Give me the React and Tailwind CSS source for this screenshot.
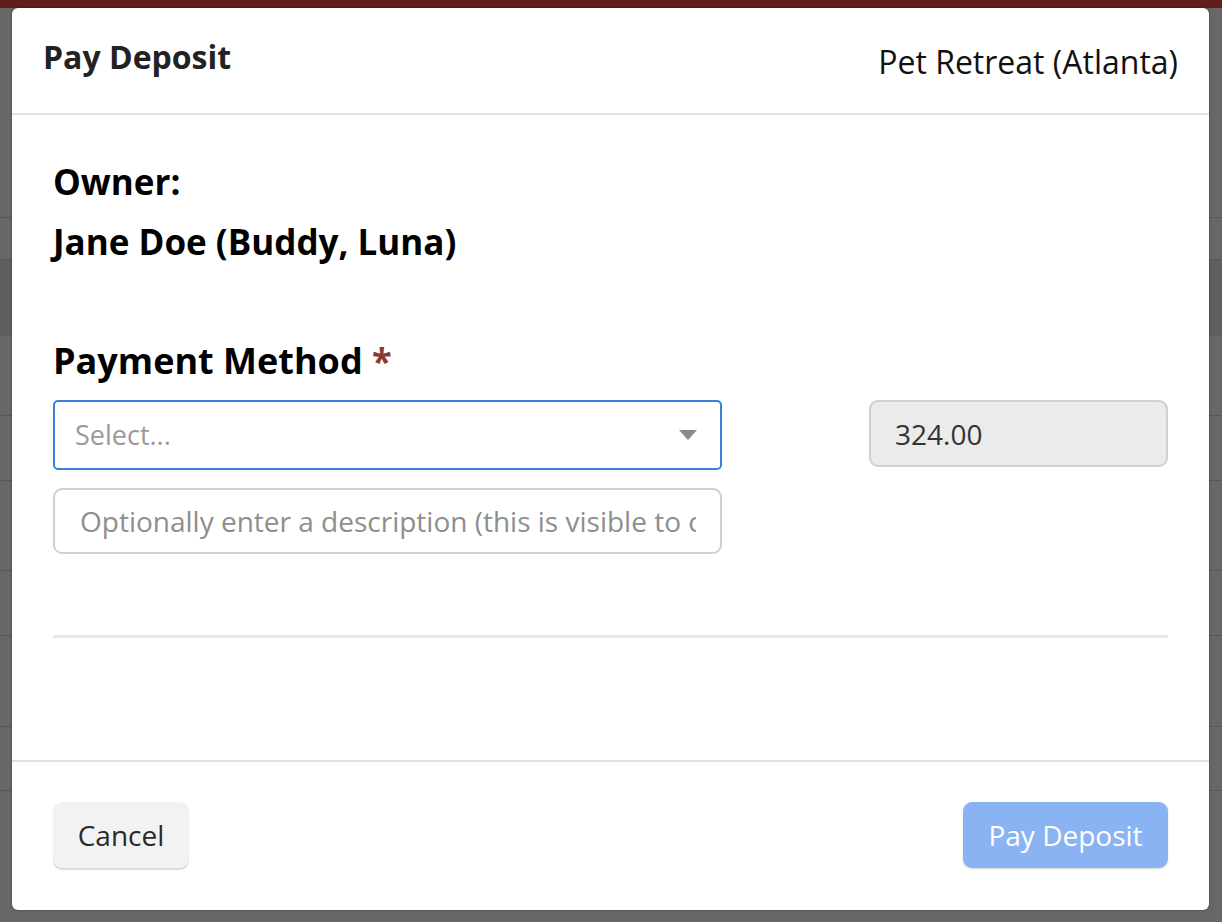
import React from "react";

export default function App() {
  return (
    <div className="relative w-[1222px] h-[922px] overflow-hidden bg-[#676767] font-['Open_Sans',sans-serif]">
      {/* page behind the overlay */}
      <div className="h-[8px] bg-[#611f1b]" />
      <div className="h-[210px] border-b border-[#565656]" />
      <div className="h-[42px] border-b border-[#565656]" />
      <div className="h-[76px] bg-[#5f5f5f]" />
      <div className="h-[80px] border-b border-[#565656]" />
      <div className="h-[65px] border-b border-[#565656]" />
      <div className="h-[90px] border-b border-[#565656]" />
      <div className="h-[65px] border-b border-[#565656]" />
      <div className="h-[91px] border-b border-[#565656]" />
      <div className="h-[64px] border-b border-[#565656]" />

      {/* dialog */}
      <div className="absolute left-[12px] top-[8px] w-[1197px] h-[902px] bg-white rounded-[6px] flex flex-col shadow-[0_0_2px_rgba(0,0,0,0.5)]">
        <div className="h-[107px] shrink-0 flex justify-between items-start px-[31px] border-b-2 border-[#e2e2e2]">
          <h1 className="mt-[30px] text-[32px] leading-[38px] font-bold text-[#222]">Pay Deposit</h1>
          <div className="mt-[35px] text-[32px] leading-[38px] text-[#111]">Pet Retreat (Atlanta)</div>
        </div>

        <div className="flex-1 px-[41px] pt-[47px]">
          <div className="text-[35px] leading-[40px] font-bold text-black">Owner:</div>
          <div className="mt-[20px] text-[35px] leading-[40px] font-bold text-black">Jane Doe (Buddy, Luna)</div>

          <div className="mt-[79px] text-[36px] leading-[40px] font-bold text-black">
            Payment Method <span className="text-[#8b3a33]">*</span>
          </div>

          <div className="mt-[19px] flex justify-between items-start">
            <div className="w-[669px] flex flex-col gap-[18px]">
              <div className="h-[70px] border-2 border-[#3b80d8] rounded-[5px] flex items-center justify-between pl-[20px] pr-[22px]">
                <span className="text-[27px] text-[#9a9a9a]">Select...</span>
                <svg width="20" height="12" viewBox="0 0 20 12">
                  <path d="M1 1h18l-9 10z" fill="#8a8a8a" />
                </svg>
              </div>
              <div className="h-[66px] border-2 border-[#d0d0d0] rounded-[9px] flex items-center pl-[25px] pr-[24px] overflow-hidden">
                <span className="text-[28px] text-[#8e8e8e] whitespace-nowrap overflow-hidden">
                  Optionally enter a description (this is visible to customers)
                </span>
              </div>
            </div>
            <div className="w-[299px] h-[67px] bg-[#ebebeb] border-2 border-[#d0d0d0] rounded-[9px] flex items-center pl-[24px]">
              <span className="text-[28px] text-[#333]">324.00</span>
            </div>
          </div>

          <div className="mt-[81px] h-[3px] bg-[#e8e8e8]" />
        </div>

        <div className="h-[150px] shrink-0 border-t-2 border-[#e2e2e2] flex justify-between items-start px-[41px] pt-[40px]">
          <button className="h-[66px] w-[136px] bg-[#f2f2f2] rounded-[9px] shadow-[0_2px_1px_#dadada] text-[28px] text-[#2a2a2a]">
            Cancel
          </button>
          <button className="h-[66px] w-[205px] bg-[#8ab3f4] rounded-[9px] shadow-[0_1px_2px_rgba(0,0,0,0.15)] text-[28px] text-white">
            Pay Deposit
          </button>
        </div>
      </div>
    </div>
  );
}
